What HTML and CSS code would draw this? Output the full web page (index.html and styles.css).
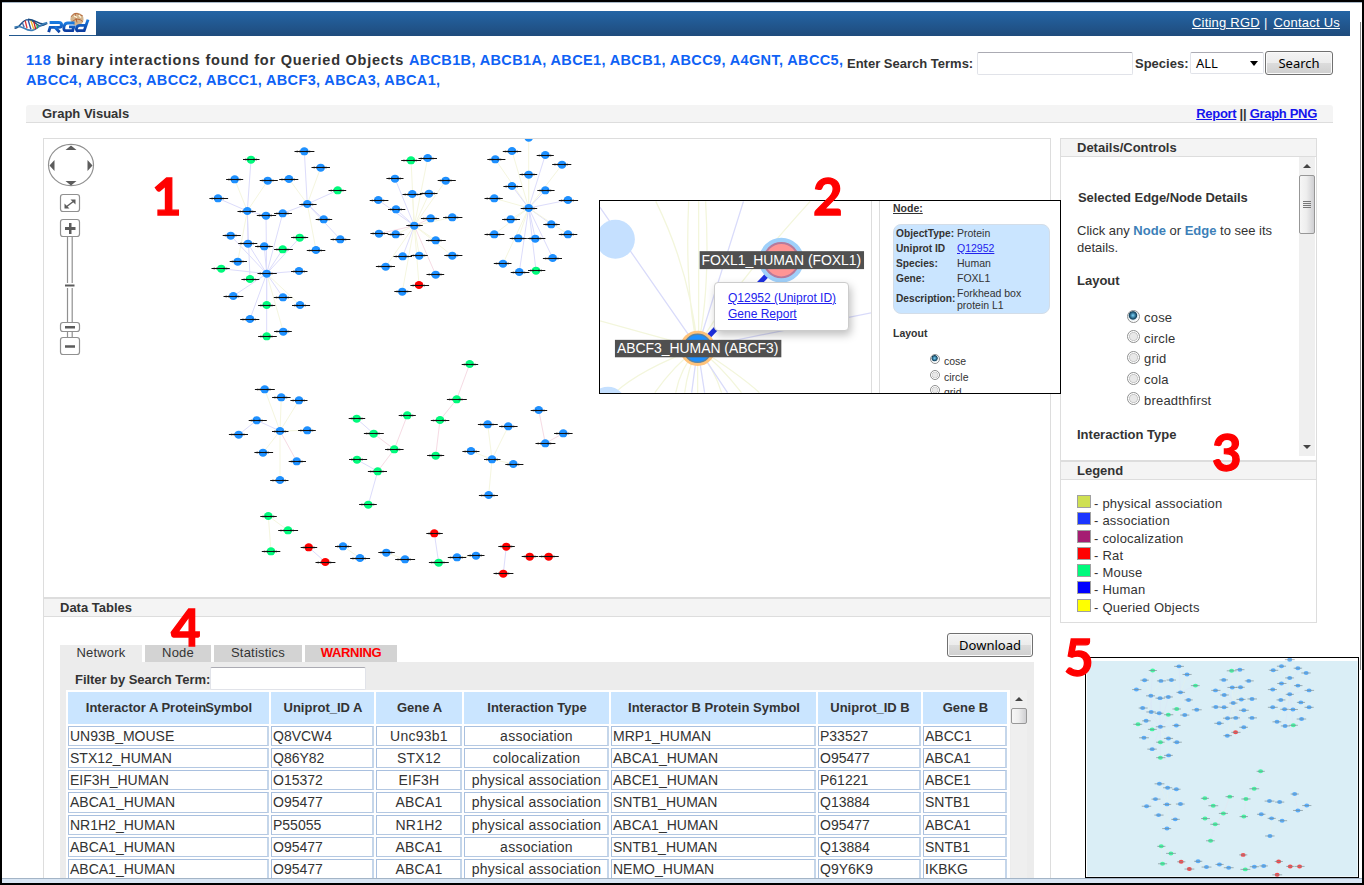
FILE: index.html
```html
<!DOCTYPE html>
<html lang="en">
<head>
<meta charset="utf-8">
<title>RGD InterViewer</title>
<link rel="stylesheet" href="styles.css">
</head>
<body>
<div class="window">
  <header class="topbar">
    <div class="logo">
      <svg width="87" height="25" viewBox="9 11 87 25">
        <defs><linearGradient id="lg" x1="0" y1="0" x2="0" y2="1"><stop offset="0" stop-color="#1a7be0"/><stop offset="1" stop-color="#0b3da0"/></linearGradient></defs>
        <path d="M13 29 C19 29 20 20 27 20 C36 20 35 31 47 24 C38 27 36 19.500 27 19.500" fill="none" stroke="#174a80" stroke-width="1.500"/>
        <path d="M13 28 C21 24 24 33 32 31 C38 29 40 24 47 23" fill="none" stroke="#3d7fb8" stroke-width="1.800"/>
        <g stroke-width="1.400"><path d="M24 21l2 8" stroke="#d33"/><path d="M27 20l3 10" stroke="#2a52a8"/><path d="M30 21l3 9" stroke="#e8b52a"/><path d="M33 22l2 8" stroke="#c22"/><path d="M36 25l1 4" stroke="#2a9a50"/><path d="M21 23l2 5" stroke="#46a"/></g>
        <circle cx="78" cy="19.500" r="6.800" fill="#d3b48c"/>
        <path d="M72 17q3-5 7-3t5 2M73 22q6-5 11 0M76 14l2 9" stroke="#b5643a" fill="none" stroke-width="1"/>
        <path d="M75 16l3 2M80 15l2 3" stroke="#fff3d6" stroke-width="1.500"/>
        <g fill="none" stroke="url(#lg)" stroke-width="3">
          <path d="M48.500 33l1.500-5h9q3 0 3-2.500t-3-2.500h-9.500"/><path d="M55 28l5 5"/>
          <path d="M75.500 23.500h-7q-3 0-4 3.500-1 4.500 2 4.500h7l1.200-4h-5"/>
          <path d="M87 26h-6q-3 0-3.500 3t2 2.500h6l4-11.500"/>
        </g>
      </svg>
    </div>
    <nav class="toplinks"><a href="#">Citing RGD</a><span class="bar">|</span><a href="#">Contact Us</a></nav>
  </header>

  <section class="query">
    <h1 class="summary"><span class="count">118</span> binary interactions found for Queried Objects <span class="ids">ABCB1B, ABCB1A, ABCE1, ABCB1, ABCC9, A4GNT, ABCC5,<br>ABCC4, ABCC3, ABCC2, ABCC1, ABCF3, ABCA3, ABCA1,</span></h1>
    <form class="search">
      <label class="terms">Enter Search Terms:</label><span class="field"></span>
      <label class="species">Species:</label><span class="select">ALL<i class="caret"></i></span>
      <button type="button" class="btn">Search</button>
    </form>
  </section>

  <div class="strip"><span>Graph Visuals</span><span class="strip-links"><a href="#">Report</a> || <a href="#">Graph PNG</a></span></div>

  <main class="columns">
    <section class="work">
      <svg id="graph" class="graph" width="1006" height="458" viewBox="44 139 1006 458">
        <g fill="#fff" stroke="#909090" stroke-width="1.200">
          <ellipse cx="71" cy="165" rx="22.500" ry="20.700"/>
          <path d="M67.500 236v110M72.200 236v110" fill="none"/>
          <rect x="60.500" y="194.500" width="19" height="17" rx="2.500"/>
          <rect x="60.500" y="219.500" width="19" height="17" rx="2.500"/>
          <rect x="60.500" y="322.500" width="19" height="9" rx="2.500"/>
          <rect x="60.500" y="337.500" width="19" height="17" rx="2.500"/>
        </g>
        <g fill="#5c5c5c">
          <path d="M65.500 150h11l-5.500-4.500zM65.500 181h11l-5.500 4.500zM54.500 160v11l-5-5.500zM87.500 160v11l5-5.500z"/>
          <path d="M65 227h4v-4h2.500v4h4v3h-4v4h-2.500v-4h-4zM65 326h10v2.500h-10zM65 345.200h10v2.500h-10z"/>
          <path d="M70.500 199.500h5v5zM64.500 203.500v5h5z"/>
        </g>
        <path d="M66 207l8-6" stroke="#5c5c5c" stroke-width="1.400"/>
        <path d="M65 285.500h9.500" stroke="#fff" stroke-width="5"/>
        <path d="M65 285.500h9.500" stroke="#5c5c5c" stroke-width="2"/>
      </svg>

      <div class="bar-title tables-title">Data Tables</div>
      <div class="tables">
        <div class="tabrow">
          <div class="tabs"><span class="tab on">Network</span><span class="tab t-node">Node</span><span class="tab t-stat">Statistics</span><span class="tab warn">WARNING</span></div>
          <button type="button" class="btn download">Download</button>
        </div>
        <div class="sheet">
          <div class="filter"><label>Filter by Search Term:</label><span class="field"></span></div>
          <div class="scrollrow">
            <div class="grid">
              <b>Interactor A Protein<span class="tight">Symbol</span></b><b>Uniprot_ID A</b><b>Gene A</b><b>Interaction Type</b><b>Interactor B Protein Symbol</b><b>Uniprot_ID B</b><b>Gene B</b>
              <span>UN93B_MOUSE</span><span>Q8VCW4</span><span class="c">Unc93b1</span><span class="c">association</span><span>MRP1_HUMAN</span><span>P33527</span><span>ABCC1</span>
              <span>STX12_HUMAN</span><span>Q86Y82</span><span class="c">STX12</span><span class="c">colocalization</span><span>ABCA1_HUMAN</span><span>O95477</span><span>ABCA1</span>
              <span>EIF3H_HUMAN</span><span>O15372</span><span class="c">EIF3H</span><span class="c">physical association</span><span>ABCE1_HUMAN</span><span>P61221</span><span>ABCE1</span>
              <span>ABCA1_HUMAN</span><span>O95477</span><span class="c">ABCA1</span><span class="c">physical association</span><span>SNTB1_HUMAN</span><span>Q13884</span><span>SNTB1</span>
              <span>NR1H2_HUMAN</span><span>P55055</span><span class="c">NR1H2</span><span class="c">physical association</span><span>ABCA1_HUMAN</span><span>O95477</span><span>ABCA1</span>
              <span>ABCA1_HUMAN</span><span>O95477</span><span class="c">ABCA1</span><span class="c">association</span><span>SNTB1_HUMAN</span><span>Q13884</span><span>SNTB1</span>
              <span>ABCA1_HUMAN</span><span>O95477</span><span class="c">ABCA1</span><span class="c">physical association</span><span>NEMO_HUMAN</span><span>Q9Y6K9</span><span>IKBKG</span>
            </div>
            <div class="sbar"><i class="up"></i><i class="thumb short"></i></div>
          </div>
        </div>
      </div>
    </section>

    <aside class="side">
      <div class="bar-title">Details/Controls</div>
      <div class="details">
        <div class="details-body">
          <h3 class="first">Selected Edge/Node Details</h3>
          <p>Click any <b>Node</b> or <b>Edge</b> to see its details.</p>
          <h3>Layout</h3>
          <ul class="radios"><li><i class="radio sel"></i>cose</li><li><i class="radio"></i>circle</li><li><i class="radio"></i>grid</li><li><i class="radio"></i>cola</li><li><i class="radio"></i>breadthfirst</li></ul>
          <h3>Interaction Type</h3>
        </div>
        <div class="sbar"><i class="up"></i><i class="thumb"><s></s><s></s><s></s><s></s></i><i class="down"></i></div>
      </div>
      <div class="bar-title legend-title">Legend</div>
      <ul class="legend">
        <li><i class="physical"></i>- physical association</li><li><i class="assoc"></i>- association</li><li><i class="coloc"></i>- colocalization</li><li><i class="rat"></i>- Rat</li><li><i class="mouse"></i>- Mouse</li><li><i class="human"></i>- Human</li><li><i class="queried"></i>- Queried Objects</li>
      </ul>
    </aside>
  </main>
  <div class="statusbar"></div>
  <div class="edge"></div>

  <section class="inset">
    <svg class="inset-graph" width="272" height="192" viewBox="600 201 272 192">
      <g fill="none" stroke="#f3f6dc" stroke-width="1.300">
        <path d="M656 201Q690 270 698 348M689 201Q685 290 698 348M699 201V348M706 201Q711 290 698 348M811 201Q730 290 698 348M600 321L698 348M698 348Q640 370 615 393M698 348Q675 365 655 393M698 348Q680 370 676 393M698 348Q688 370 685 393M698 348V393M698 348Q715 370 722 393M698 348Q740 375 760 393M698 348Q720 365 742 393"/>
      </g>
      <g fill="none" stroke="#d9dbfa" stroke-width="1.300"><path d="M744 201L698 348M600 207L698 348L728 393M698 348L872 313M698 348L692 393M698 348L705 393"/></g>
      <circle cx="615.500" cy="239" r="19.500" fill="#c5e0ff"/><circle cx="608" cy="405" r="18" fill="#c5e0ff"/>
      <path d="M698 348L782 260" stroke="#1d2fe0" stroke-width="5"/>
      <circle cx="782" cy="260" r="20" fill="#ff9595" stroke="#9fd0fa" stroke-width="5"/><circle cx="782" cy="260" r="17.300" fill="none" stroke="#b77a9b" stroke-width="2"/>
      <circle cx="698" cy="348.500" r="16" fill="#1e90ff" stroke="#ffc27a" stroke-width="3.500"/><circle cx="698" cy="348.500" r="14" fill="none" stroke="#5a83a0" stroke-width="1.500"/>
      <rect x="700" y="251" width="165" height="18" fill="#505050"/><rect x="615" y="340" width="167" height="17.500" fill="#505050"/>
      <text x="702" y="264.500" textLength="160" class="tag">FOXL1_HUMAN (FOXL1)</text><text x="617" y="353.500" textLength="162" class="tag">ABCF3_HUMAN (ABCF3)</text>
    </svg>
    <div class="popup"><a href="#">Q12952 (Uniprot ID)</a><a href="#">Gene Report</a></div>
    <div class="inset-side">
      <h4 class="node">Node:</h4>
      <dl class="card">
        <dt>ObjectType:</dt><dd>Protein</dd><dt>Uniprot ID</dt><dd><a href="#">Q12952</a></dd><dt>Species:</dt><dd>Human</dd><dt>Gene:</dt><dd>FOXL1</dd><dt class="last">Description:</dt><dd class="two">Forkhead box<br>protein L1</dd>
      </dl>
      <h4>Layout</h4>
      <ul class="mini-radios"><li><i class="radio sel"></i>cose</li><li><i class="radio"></i>circle</li><li><i class="radio"></i>grid</li></ul>
    </div>
  </section>

  <svg id="mini" class="mini" width="272" height="219" viewBox="1086 658 272 219">
    <rect x="1087" y="661" width="270.500" height="215.500" fill="#daeef6"/>
  </svg>

  <span class="num n1">1</span><span class="num n2">2</span><span class="num n3">3</span><span class="num n4">4</span><span class="num n5">5</span>
</div>
<script src="graph.js"></script>
</body>
</html>
```
FILE: styles.css
```css
* { box-sizing: border-box; }
body { margin: 0; font: 13px/16px "Liberation Sans", Arial, sans-serif; color: #333; background: #fff; }
ul, dl, dd, h1, h3, h4, p { margin: 0; padding: 0; list-style: none; }
a { color: #2222ee; }
.window { position: relative; width: 1364px; height: 885px; border: 2px solid #000; overflow: hidden; display: flex; flex-direction: column; box-shadow: inset 0 1px #a9b9c8; }

.topbar { display: flex; margin: 9px 12px 0 7px; height: 25px; background: linear-gradient(#2465a5, #1f4b7c); flex: none; }
.logo { width: 87px; height: 25px; background: #fff; border-bottom: 1px solid #22588f; }
.logo svg { display: block; height: 24px; }
.toplinks { margin-left: auto; padding: 4px 10px 0 0; letter-spacing: .22px; color: #fff; white-space: pre; }
.toplinks a { color: #fff; }
.bar { margin: 0 6px 0 4px; }

.query { display: flex; height: 69px; padding: 14px 0 0 24px; flex: none; }
.summary { width: 820px; font-size: 14.500px; line-height: 20px; letter-spacing: .76px; white-space: nowrap; }
.count, .ids { color: #0f62f5; }
.ids { letter-spacing: .36px; }
.search { display: flex; height: 26px; align-items: center; font-weight: bold; margin-left: 1px; }
.field { width: 156px; height: 23px; background: #fff; border: 1px solid #e1e3e9; border-top-color: #ababb3; border-radius: 2px; flex: none; }
.search label { padding-top: 1px; }
.terms { width: 130px; }
.search .field { margin-right: 2px; }
.species { width: 55px; }
.select { width: 74px; height: 22px; margin-right: 1px; padding: 3px 5px; border: 1px solid #e1e3e9; border-top-color: #ababb3; display: flex; justify-content: space-between; align-items: center; font: 13px/16px "Noto Sans", sans-serif; color: #000; border-radius: 2px; }
.caret { border: 4.5px solid transparent; border-top: 5px solid #000; border-bottom: 0; }
.btn { height: 24px; width: 68px; padding: 0; border: 1px solid #707070; border-radius: 3px; background: linear-gradient(#f4f4f4, #ececec 50%, #dcdcdc 50%, #cfcfcf); box-shadow: inset 0 0 0 1px #fafafa; font: 13px/20px "Noto Sans", sans-serif; color: #000; }

.strip { display: flex; justify-content: space-between; height: 18px; margin: 0 29px 0 24px; padding: 1px 16px 0 16px; background: #f4f4f4; border-bottom: 1px solid #ddd; border-radius: 3px 3px 0 0; font-weight: bold; flex: none; }
.strip a { color: #1414ee; }
.strip-links { letter-spacing: -.3px; }
.columns { display: flex; flex: 1; min-height: 0; padding: 15px 0 0 41px; gap: 9px; overflow: hidden; }
.work { width: 1008px; border: 1px solid #ddd; border-bottom: 0; overflow: hidden; }
.graph { display: block; }
.bar-title { height: 18px; padding: 0 16px; background: #f4f4f4; border-bottom: 1px solid #ddd; font-weight: bold; line-height: 17px; }
.tables-title { border-top: 2px solid #ddd; height: 20px; }
.tables { padding: 16px 16px 0; }
.tabrow { display: flex; justify-content: space-between; height: 29px; }
.tabs { display: flex; gap: 3px; align-items: flex-end; letter-spacing: .2px; }
.tab { height: 17px; background: #d3d3d3; text-align: center; }
.tab.on { background: #ececec; width: 82px; }
.t-node { width: 66px; }
.t-stat { width: 88px; }
.tab.warn { width: 92px; color: #f00; font-weight: bold; letter-spacing: -.3px; }
.btn.download { width: 86px; margin-right: 1px; }
.sheet { height: 240px; background: #ececec; padding: 5px 7px 0 6px; }
.filter { display: flex; height: 23px; padding-left: 9px; font-weight: bold; line-height: 26px; }
.filter label { width: 135px; white-space: nowrap; letter-spacing: -.05px; }
.scrollrow { display: flex; gap: 1px; height: 212px; }
.grid { width: 944px; padding: 2px; background: #fff; display: grid; grid-template-columns: 201px 103px 86px 145px 205px 103px 84px; grid-template-rows: 32px repeat(7, 20.150px); gap: 2px; font-size: 14px; align-content: start; }
.grid b { background: #cae5ff; font-size: 13px; line-height: 32px; text-align: center; padding-left: 1px; }
.tight { margin-left: -1px; }
.grid > span { border: 1px solid #a9c0df; border-right: 2px solid #c5d6ea; border-bottom-color: #b4c8e2; padding: 0 1px; line-height: 18px; white-space: nowrap; }
.grid .c { text-align: center; letter-spacing: .25px; padding: 0 0 0 1px; }
.sbar { width: 16px; background: #efefef; display: flex; flex-direction: column; align-items: center; flex: none; }
.up, .down { border: 4px solid transparent; border-bottom: 4px solid #444; border-top: 0; margin: 7px 0; flex: none; }
.down { border-top: 4px solid #444; border-bottom: 0; margin-top: auto; }
.thumb { width: 16px; height: 59px; border: 1px solid #979797; border-radius: 2px; background: linear-gradient(90deg, #f6f6f6, #eee 45%, #cfcfd2); display: flex; flex-direction: column; align-items: center; justify-content: center; gap: 1px; flex: none; }
.thumb.short { height: 16px; }
.thumb s { width: 8px; height: 1px; background: #777; }

.side { width: 257px; height: 485px; border: 1px solid #ddd; }
.side > .bar-title { height: 18px; }
.details { display: flex; justify-content: space-between; height: 303px; padding-right: 1px; }
.details-body { padding: 32px 0 0 16px; width: 225px; line-height: 17px; }
.details .sbar { height: 299px; }
.details h3 { font-size: 13px; }
.details p { margin: 16px 0; }
.details p b { color: #3d7fb8; }
.details h3.first { margin-left: 1px; letter-spacing: -.06px; }
.radios { margin: 18px 0 16px 50px; }
.radios li { height: 20.600px; display: flex; align-items: center; line-height: 20px; gap: 4px; letter-spacing: .2px; padding-top: 2px; }
.radio { width: 13px; height: 13px; margin-top: -4px; border: 1px solid #8e8f8f; border-radius: 50%; background: radial-gradient(#e8e8e8 40%, #c4c4c4 55%, #fff 60%); }
.radio.sel { background: radial-gradient(circle at 45% 40%, #6fc4ea 5%, #10405c 42%, #dfe9ee 52%, #fff 65%); }
.side > .legend-title { border-top: 2px solid #ddd; height: 20px; }
.legend { padding: 14px 0 0 16px; letter-spacing: .22px; }
.legend li { height: 17.250px; display: flex; align-items: center; line-height: 17px; padding-top: 2px; }
.legend i { width: 14px; height: 13px; margin: -4px 3px 0 0; border: 1px solid #a0a0a0; }
.physical { background: #cfe052; } .assoc { background: #1b35ff; } .coloc { background: #a51d72; } .rat { background: #f00; } .mouse { background: #00fa7c; } .human { background: #00f; } .queried { background: #ff0; }
.statusbar { height: 5px; background: #d9e6f4; border-top: 1px solid #a3b4c6; flex: none; }
.edge { position: absolute; left: 1358px; top: 20px; height: 648px; width: 1px; background: #888; }

.inset { position: absolute; left: 597px; top: 198px; width: 462px; height: 194px; background: #fff; border: 1px solid #000; display: flex; overflow: hidden; }
.inset-graph { flex: none; border-right: 1px solid #ddd; }
.tag { font-size: 14px; fill: #fff; }
.popup { position: absolute; left: 114px; top: 81px; width: 135px; height: 49px; padding: 8px 13px; border: 1px solid #ccc; border-radius: 4px; background: #fff; box-shadow: 2px 4px 9px rgba(0,0,0,.25); display: flex; flex-direction: column; font-size: 12px; line-height: 15.500px; white-space: nowrap; }
.inset-side { margin-left: 7px; border-left: 1px solid #ddd; padding: 0 0 0 13px; width: 180px; flex: none; font-size: 10.500px; }
.inset .inset-side h4 { font-size: 10.500px; line-height: 14px; }
.node { text-decoration: underline; }
.card { width: 157px; height: 90px; margin: 9px 0 12px; padding: 1px 2px; background: #cae5ff; border: 1px solid #d3dde8; border-radius: 8px; display: grid; grid-template-columns: 61px 1fr; grid-template-rows: repeat(4, 14.900px) 26px; line-height: 15px; white-space: nowrap; }
.card dt { font-weight: bold; font-size: 10.200px; }
.card .last { line-height: 26px; }
.card .two { line-height: 12px; padding-top: 1px; }
.mini-radios { padding: 13px 0 0 37px; }
.mini-radios li { height: 15.600px; display: flex; gap: 4px; line-height: 16px; }
.mini-radios .radio { width: 10px; height: 10px; margin-top: 1px; }

.mini { position: absolute; left: 1083px; top: 655px; border: 1px solid #000; box-sizing: content-box; background: #fff; }
.num { position: absolute; font: bold 51px/60px Lato, sans-serif; color: #f00; -webkit-text-stroke: 1.3px #f00; }
.n1 { left: 150px; top: 164px; } .n2 { left: 811px; top: 164px; } .n3 { left: 1210px; top: 420px; } .n4 { left: 169px; top: 595px; } .n5 { left: 1062px; top: 625px; }
```
FILE: graph.js
```js
// Each cluster: nodes as "x,y[,colour]" (default blue) and edges as "from-to[kind]".
// Kinds: none = association, y = physical association, p = colocalization.
const clusters = [
  { nodes: "251,159.7,g 304.3,151.3 320.7,167.7 234.7,179.3 267.7,180.7 289,179 337.7,190.3,g 218,198.3 307.3,204 247.3,211 266,215.7 282.7,213.3 323.7,219.3 340.3,239.3 316,250 299.7,237.7,g 230.7,235.7 248,243.7 264.3,246.3 282.7,249.3,g 237.7,261.7 221.3,268.7,g 266.7,273.7 250,279,g 299,271 233.3,296 283,297.3 266.7,305,g 300,305 250,319 283.3,331.7 266.7,336.3,g",
    edges: "0-9 3-9y 4-9y 7-9 10-9 17-9 20-9y 23-9 1-8 2-8y 5-8y 6-8 11-8 12-8 13-8 14-8y 10-22 11-22 15-22 16-22 17-22 18-22 19-22 21-22 24-22 25-22 26-22 27-22 28-22y 29-22 30-22y 31-22" },
  { nodes: "414.3,225.7 411,160.3,g 427.7,158 395,178.7 445.7,180.7 412.3,194 429,193.7 378.3,200 396,209.3 430.7,218.3 452.3,217.3 379,233.7 395.7,234.3 435.7,240.3 402.7,256.3 419.3,255.7 452.3,255.7 385.7,266.7 435.7,274.7 419,285,r 402.3,291.7",
    edges: "0-1y 0-2y 0-3 0-4y 0-5y 0-6y 0-7 0-8 0-9p 0-10y 0-11p 0-12y 0-13y 0-14 0-15y 0-16y 0-17y 0-18p 0-19y 0-20y" },
  { nodes: "528.7,208 528.7,137.7 512,151 545.3,155 495.3,159.3 562,164.7 528.7,174.7 512,186 545.3,190.3 494.3,198.3 568,200 510.7,219.3 551.3,224.3 494.3,234.3 568,234.3 518.3,238.3 535.3,238.7 552.7,258 503,263.7 519.3,272 536,270.7,g",
    edges: "0-1y 0-2y 0-3 0-4y 0-5y 0-6y 0-7 0-8 0-9y 0-10 0-11y 0-12 0-13y 0-14y 0-15y 0-16 0-17 0-18y 0-19 0-20" },
  { nodes: "280,431 264.7,389.3 281.3,397.3 299,400.3 256.7,420.3 238.7,434.7 307.3,430.3 263,452.7 296.7,461.3 280,480", edges: "0-1y 0-2y 0-3y 0-4 4-5 0-6y 0-7y 0-8p 0-9y" },
  { nodes: "356.7,418.7,g 373.7,433.7,g 394.3,449.3,g 407.3,415.3,g 357,459.7,g 377.7,471.3,g 368.3,504.7,g", edges: "0-1 1-2p 2-3p 2-5p 4-5 5-6" },
  { nodes: "268.3,516,g 288,530.3,g 271,551.3,g", edges: "0-1y 0-2y" },
  { nodes: "308.7,547.3,r 325.3,562,r", edges: "0-1" },
  { nodes: "343,546.3 360,558", edges: "0-1y" },
  { nodes: "386.3,552.7 405,559.3", edges: "0-1y" },
  { nodes: "469.7,364,g 456.7,399.3,g 440,420,g 435.7,455.7,g", edges: "0-1p 1-2p 2-3p" },
  { nodes: "492,459.3 487.7,424.3 508.3,426.3 471,451 513.3,464 488.7,495", edges: "0-1y 0-2y 0-3y 0-4y 0-5y" },
  { nodes: "538.7,410 545.3,443.3 563.3,433.3", edges: "0-1p 1-2p" },
  { nodes: "434.3,533.3,r 438.7,562.7,g 457,557.3 476,555.7", edges: "0-1 2-3y" },
  { nodes: "506.3,546.7,r 503.3,573.7,r", edges: "0-1" },
  { nodes: "529.7,556.7,r 548.7,556.7,r", edges: "0-1y" }
];
const fills = { b: "#1e90ff", g: "#00fa7c", r: "#f00" };
const strokes = { "": "#dcdcfb", y: "#f5f6df", p: "#f6dbe4" };

function render(mini) {
  let edges = "", nodes = "";
  for (const c of clusters) {
    const pts = c.nodes.split(" ").map(s => s.split(","));
    for (const e of c.edges.split(" ")) {
      const [, a, b, k] = e.match(/(\d+)-(\d+)(\w?)/);
      edges += `<path d="M${pts[a][0]} ${pts[a][1]}L${pts[b][0]} ${pts[b][1]}" stroke="${strokes[k]}"/>`;
    }
    const ink = mini ? "#4a5a60" : "#111";
    pts.forEach(([x, y, k], i) => {
      x = +x; y = +y;
      const ly = mini ? y : Math.floor(y) + 0.5;
      const l = 8 + (i * 7 % 4) * 0.6, r = 8.5 + (i * 5 % 3) * 0.8;
      nodes += `<ellipse cx="${x}" cy="${y}" rx="${mini ? 5 : 4.3}" ry="4" fill="${fills[k || "b"]}"/>` +
        `<path d="M${x - l} ${ly}H${x + r}" stroke="${ink}" stroke-width="${mini ? 1.3 : 1}"/>`;
      if (!mini) nodes += `<path d="M${x - l + 2} ${ly}h4M${x + 2} ${ly}h4" stroke="#111" stroke-width="1.500" stroke-dasharray="1.600 .9"/>`;
    });
  }
  return `<g${mini ? ' transform="translate(1028.8 591.7) scale(.4935)"' : ""}><g fill="none"${mini ? ' opacity=".45"' : ""}>${edges}</g><g${mini ? ' opacity=".68"' : ""}>${nodes}</g></g>`;
}
document.getElementById("graph").insertAdjacentHTML("beforeend", render(false));
document.getElementById("mini").insertAdjacentHTML("beforeend", render(true));
```
